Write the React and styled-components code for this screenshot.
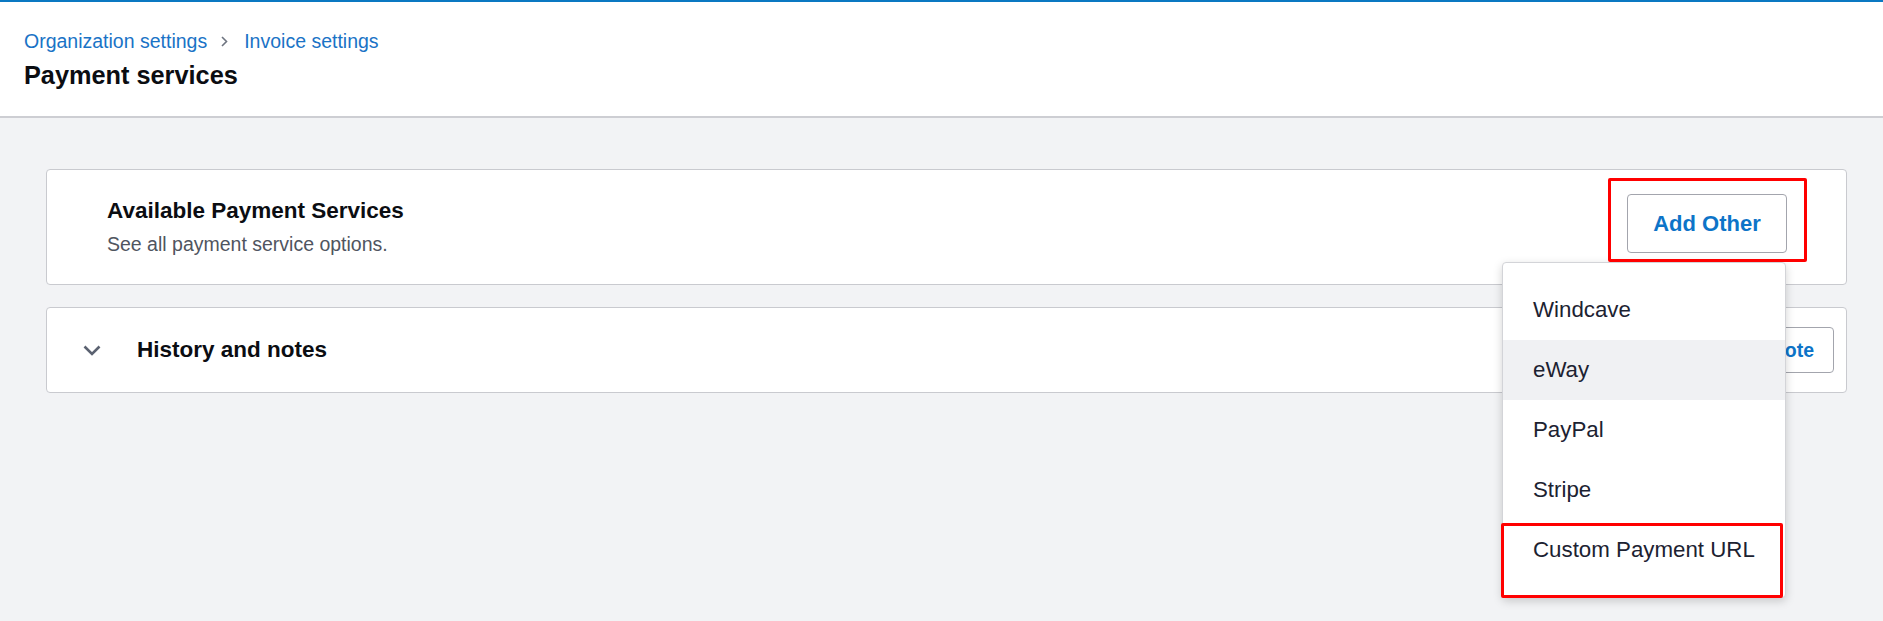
import React from 'react';
import styled, { createGlobalStyle } from 'styled-components';

const GlobalStyle = createGlobalStyle`
  html, body {
    margin: 0;
    padding: 0;
    background: #f2f3f5;
    font-family: "Liberation Sans", Arial, sans-serif;
  }
  * { box-sizing: border-box; }
`;

const Page = styled.div`
  min-height: 621px;
  background: #f2f3f5;
`;

const Header = styled.header`
  background: #ffffff;
  border-top: 2px solid #0a78c2;
  border-bottom: 2px solid #cdced3;
  padding: 27px 24px 26px;
`;

const Breadcrumb = styled.nav`
  display: flex;
  align-items: center;
  height: 24px;
  font-size: 19.5px;
  line-height: 24px;
`;

const Crumb = styled.a`
  color: #1a73c6;
  text-decoration: none;
`;

const CrumbSep = styled.span`
  display: inline-flex;
  margin: 0 16px 0 14px;
`;

const PageTitle = styled.h1`
  margin: 7px 0 0;
  font-size: 25.3px;
  line-height: 30px;
  font-weight: 700;
  color: #0b0d12;
`;

const Main = styled.main`
  padding: 51px 36px 0 46px;
  display: flex;
  flex-direction: column;
  gap: 22px;
`;

const Card = styled.section`
  position: relative;
  background: #ffffff;
  border: 1px solid #c9cacf;
  border-radius: 4px;
  display: flex;
  align-items: ${(p) => (p.$center ? 'center' : 'flex-start')};
  height: ${(p) => p.$height}px;
`;

const CardText = styled.div`
  flex: 1;
  padding: 27px 0 0 60px;
`;

const CardTitle = styled.h2`
  margin: 0;
  font-size: 22.5px;
  line-height: 28px;
  font-weight: 700;
  color: #0b0d12;
`;

const CardSub = styled.p`
  margin: 7px 0 0;
  font-size: 19.5px;
  line-height: 24px;
  color: #50555f;
`;

const Actions = styled.div`
  position: relative;
  margin: 24px 59px 0 0;
`;

const OutlineButton = styled.button`
  font-family: inherit;
  background: #ffffff;
  border: 1px solid #a3a5ad;
  border-radius: 4px;
  color: #0d74c8;
  font-weight: 700;
  font-size: ${(p) => p.$size || 22}px;
  height: ${(p) => p.$h}px;
  width: ${(p) => (p.$w ? `${p.$w}px` : 'auto')};
  padding: 0 19px;
  cursor: pointer;
`;

const Annotation = styled.div`
  position: absolute;
  top: ${(p) => p.$t}px;
  bottom: ${(p) => p.$b}px;
  left: ${(p) => p.$l}px;
  right: ${(p) => p.$r}px;
  border: 3px solid #ff0000;
  border-radius: 2px;
  pointer-events: none;
  z-index: 20;
`;

const Menu = styled.ul`
  position: absolute;
  top: 68px;
  right: 1px;
  width: 284px;
  margin: 0;
  padding: 17px 0;
  list-style: none;
  background: #ffffff;
  border: 1px solid #d3d4d8;
  border-radius: 4px;
  box-shadow: 0 3px 10px rgba(0, 0, 0, 0.18);
  z-index: 10;
`;

const MenuItem = styled.li`
  position: relative;
  display: flex;
  align-items: center;
  height: 60px;
  padding-left: 30px;
  font-size: 22.3px;
  color: #1c2231;
  background: ${(p) => (p.$active ? '#f0f1f3' : 'transparent')};
`;

const Chevron = styled.span`
  display: inline-flex;
  margin: 0 36px 0 36px;
`;

const HistoryTitle = styled(CardTitle)`
  flex: 1;
`;

const NoteWrap = styled.div`
  margin-right: 12px;
`;

const items = ['Windcave', 'eWay', 'PayPal', 'Stripe', 'Custom Payment URL'];

export default function App() {
  return (
    <Page>
      <GlobalStyle />
      <Header>
        <Breadcrumb>
          <Crumb href="#">Organization settings</Crumb>
          <CrumbSep>
            <svg width="7" height="11" viewBox="0 0 7 11">
              <polyline points="1,1 5.5,5.5 1,10" fill="none" stroke="#6e7480" strokeWidth="1.6" />
            </svg>
          </CrumbSep>
          <Crumb href="#">Invoice settings</Crumb>
        </Breadcrumb>
        <PageTitle>Payment services</PageTitle>
      </Header>

      <Main>
        <Card $height={116}>
          <CardText>
            <CardTitle>Available Payment Services</CardTitle>
            <CardSub>See all payment service options.</CardSub>
          </CardText>
          <Actions>
            <OutlineButton $w={160} $h={59}>Add Other</OutlineButton>
            <Annotation $t={-16} $b={-9} $l={-19} $r={-20} />
            <Menu>
              {items.map((name, i) => (
                <MenuItem key={name} $active={i === 1}>
                  {name}
                  {i === items.length - 1 && <Annotation $t={3} $b={-18} $l={-2} $r={2} />}
                </MenuItem>
              ))}
            </Menu>
          </Actions>
        </Card>

        <Card $height={86} $center>
          <Chevron>
            <svg width="18" height="11" viewBox="0 0 18 11">
              <polyline points="1.5,1.5 9,9 16.5,1.5" fill="none" stroke="#5b6271" strokeWidth="2.6" />
            </svg>
          </Chevron>
          <HistoryTitle>History and notes</HistoryTitle>
          <NoteWrap>
            <OutlineButton $h={46} $size={19.5}>Add Note</OutlineButton>
          </NoteWrap>
        </Card>
      </Main>
    </Page>
  );
}
